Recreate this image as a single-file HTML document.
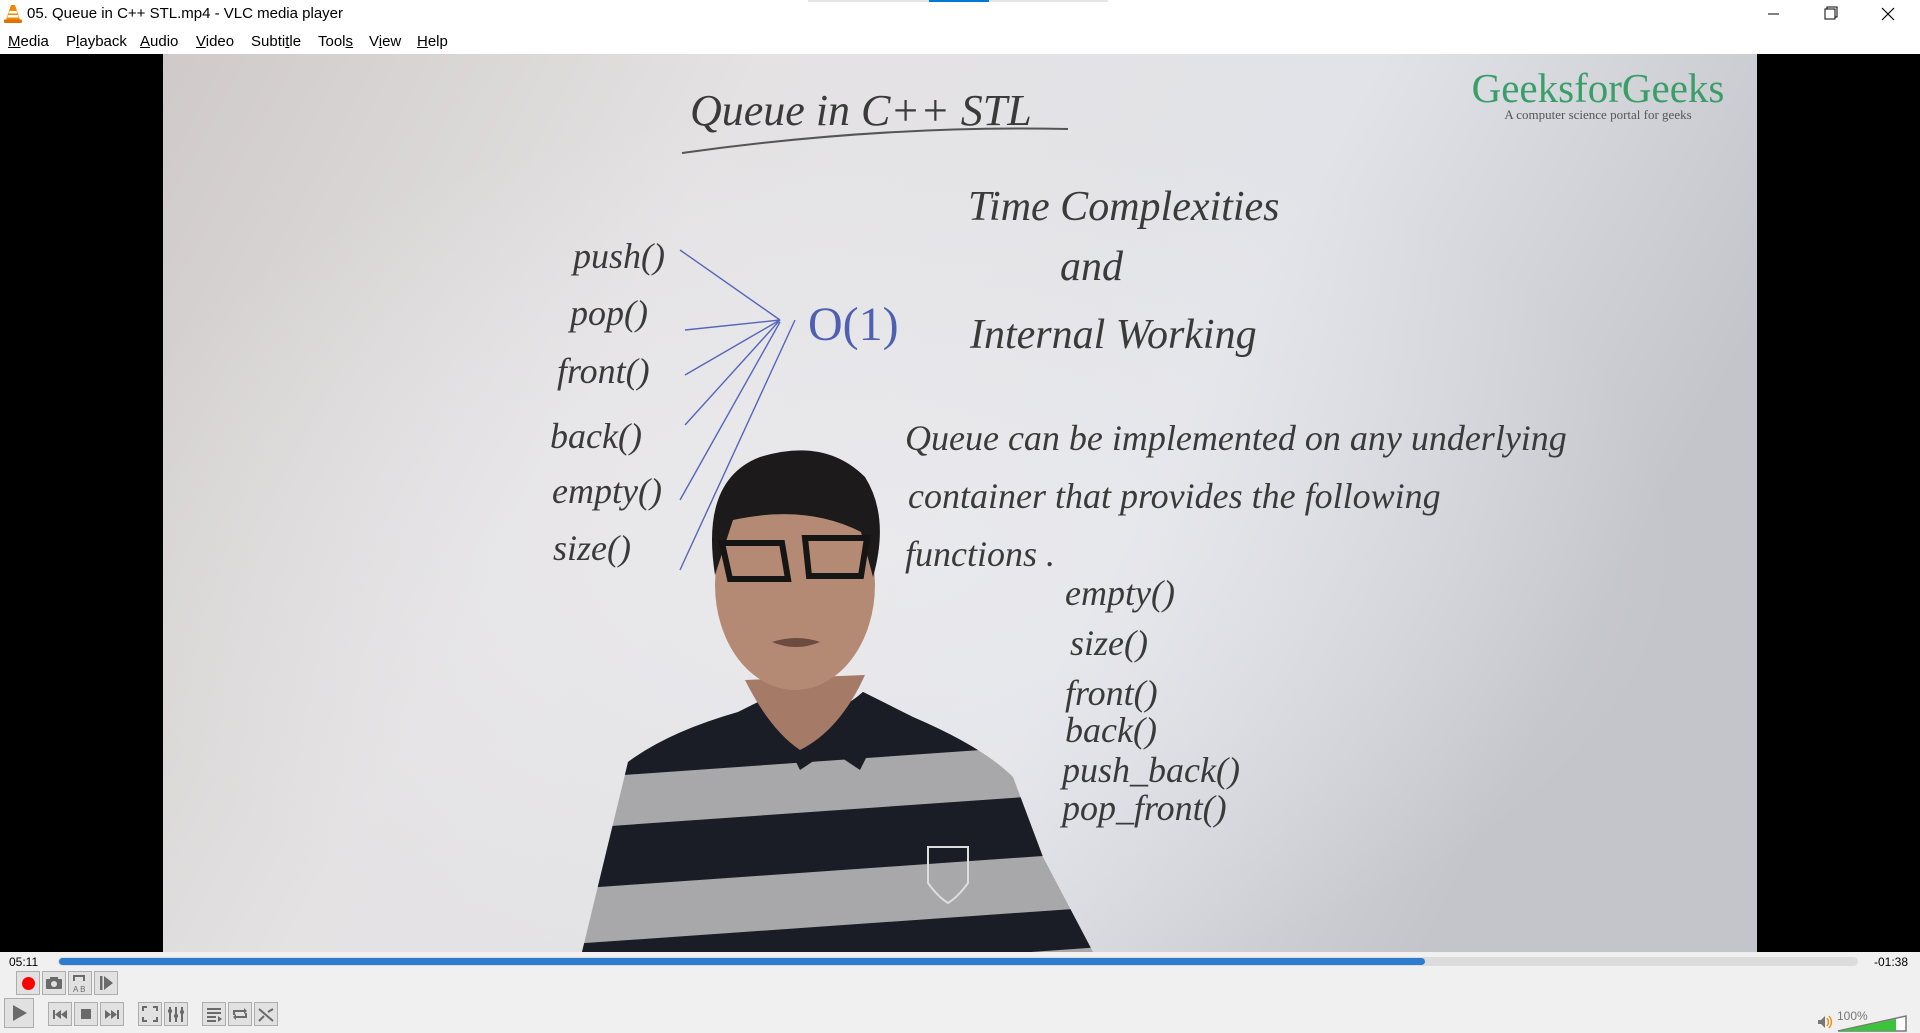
<!DOCTYPE html>
<html><head><meta charset="utf-8">
<style>
*{margin:0;padding:0;box-sizing:border-box}
body{width:1920px;height:1030px;overflow:hidden;background:#f0f0f0;font-family:"Liberation Sans",sans-serif;position:relative}
.title{position:absolute;left:0;top:0;width:1920px;height:28px;background:#fff}
.title span{position:absolute;left:27px;top:5px;font-size:15px;color:#000}
.menu{position:absolute;left:0;top:28px;width:1920px;height:26px;background:#fff}
.menu span{position:absolute;top:5px;font-size:15px;color:#000}
.video{position:absolute;left:0;top:54px;width:1920px;height:898px;background:#000}
.ctrl{position:absolute;left:0;top:952px;width:1920px;height:78px;background:#f0f0f0}
.b{position:absolute;width:24px;height:24px;border:1px solid #adadad;background:#e1e1e1}
.t{position:absolute;font-size:12px;color:#000}
</style></head><body>
<div class="title">
<svg style="position:absolute;left:3px;top:4px" width="20" height="20" viewBox="0 0 20 20"><path d="M8 1h4l5 15H3z" fill="#f08a00"/><path d="M6.5 7h7l.8 2.5h-8.6zM5.2 11h9.6l.8 2.5H4.4z" fill="#fff"/><rect x="1" y="15.5" width="18" height="3.5" rx="1" fill="#e07000"/></svg>
<span>05. Queue in C++ STL.mp4 - VLC media player</span>
<div style="position:absolute;left:808px;top:0;width:300px;height:2px;background:#e5e5e5"></div>
<div style="position:absolute;left:929px;top:0;width:60px;height:2px;background:#0078d7"></div>
<svg style="position:absolute;left:1760px;top:0" width="160" height="28"><path d="M8 14h11" stroke="#000"/><rect x="65" y="9" width="10" height="10" fill="none" stroke="#000"/><path d="M67 9V7h10v10h-2" fill="none" stroke="#000"/><path d="M122 8l12 12M134 8l-12 12" stroke="#000" stroke-width="1.2"/></svg>
</div>
<div class="menu">
<span style="left:8px"><u>M</u>edia</span><span style="left:66px">P<u>l</u>ayback</span><span style="left:140px"><u>A</u>udio</span><span style="left:196px"><u>V</u>ideo</span><span style="left:251px">Subti<u>t</u>le</span><span style="left:318px">Tool<u>s</u></span><span style="left:369px">V<u>i</u>ew</span><span style="left:417px"><u>H</u>elp</span>
</div>
<div class="video">
<svg width="1920" height="898" viewBox="0 54 1920 898" style="position:absolute;left:0;top:0">
<defs>
<linearGradient id="wb" x1="0" y1="0" x2="1" y2="0.3"><stop offset="0" stop-color="#cfcac9"/><stop offset="0.35" stop-color="#e4e2e3"/><stop offset="0.7" stop-color="#e2e3e8"/><stop offset="1" stop-color="#c4c5cb"/></linearGradient>
<radialGradient id="sh" cx="0.45" cy="0.55" r="0.5"><stop offset="0" stop-color="#eeeef2" stop-opacity="0.6"/><stop offset="1" stop-color="#eeeef2" stop-opacity="0"/></radialGradient>
<clipPath id="body"><path d="M628 762q40-30 110-50l40-20q40 40 85 0l50 25q70 30 100 60l30 80 50 95H582z"/></clipPath>
</defs>
<rect x="163" y="54" width="1594" height="898" fill="url(#wb)"/>
<rect x="163" y="54" width="1594" height="898" fill="url(#sh)"/>
<g fill="#3a3a3a" font-family="Liberation Serif" font-style="italic">
<text x="690" y="125" font-size="44">Queue  in C++ STL</text>
<text x="968" y="220" font-size="42">Time Complexities</text>
<text x="1060" y="280" font-size="42">and</text>
<text x="970" y="348" font-size="42">Internal Working</text>
<text x="808" y="340" font-size="48" fill="#5060b0" font-style="normal">O(1)</text>
<g font-size="36">
<text x="573" y="268">push()</text><text x="570" y="325">pop()</text><text x="557" y="383">front()</text><text x="550" y="448">back()</text><text x="552" y="503">empty()</text><text x="553" y="560">size()</text>
<text x="905" y="450">Queue can be implemented on any underlying</text>
<text x="908" y="508">container that provides the following</text>
<text x="905" y="566">functions .</text>
<text x="1065" y="605">empty()</text><text x="1070" y="655">size()</text><text x="1065" y="705">front()</text><text x="1065" y="742">back()</text><text x="1062" y="782">push_back()</text><text x="1062" y="820">pop_front()</text>
</g>
</g>
<path d="M682 153q200-28 386-24" stroke="#555" stroke-width="2" fill="none"/>
<g stroke="#5566bb" stroke-width="1.4"><path d="M680 250l100 70M685 330l95-10M685 375l95-55M685 425l95-105M680 500l100-178M680 570l115-250"/></g>
<text x="1598" y="102" font-size="41" fill="#3a9e69" font-family="Liberation Serif" text-anchor="middle">GeeksforGeeks</text>
<text x="1598" y="119" font-size="13" fill="#555" font-family="Liberation Serif" text-anchor="middle">A computer science portal for geeks</text>
<!-- person -->
<g clip-path="url(#body)">
<rect x="560" y="680" width="560" height="280" fill="#a8a8aa"/>
<g fill="#1a1c26" transform="rotate(-4 840 820)">
<rect x="560" y="690" width="580" height="70"/>
<rect x="560" y="810" width="580" height="60"/>
<rect x="560" y="925" width="580" height="40"/>
</g>
<path d="M760 690l40 80 30-20 30 20 40-80z" fill="#1a1c26"/>
</g>
<path d="M745 680q25 50 55 70 40-20 65-75z" fill="#a57a66"/>
<ellipse cx="795" cy="585" rx="80" ry="105" fill="#b48a75"/>
<path d="M715 575q-15-95 45-118 65-20 105 20 25 40 8 100l-12-45q-55-28-128-12z" fill="#1c1a1a"/>
<path d="M722 543h60l6 36h-58zM805 538h62l-6 38h-52z" fill="none" stroke="#151515" stroke-width="6"/>
<path d="M772 642q25-8 48 0q-24 10-48 0z" fill="#6e4b40"/>
<path d="M928 847h40v36q-10 14-20 20-10-6-20-20z" fill="none" stroke="#ddd" stroke-width="2"/>
</svg>
</div>
<div class="ctrl">
<span class="t" style="left:9px;top:3px">05:11</span>
<span class="t" style="left:1874px;top:3px">-01:38</span>
<div style="position:absolute;left:58px;top:5px;width:1800px;height:9px;border-radius:5px;background:#dcdcdc"></div>
<div style="position:absolute;left:59px;top:6px;width:1366px;height:7px;border-radius:4px;background:#2e7cd0"></div>
<div class="b" style="left:16px;top:19px"><div style="position:absolute;left:5px;top:5px;width:13px;height:13px;border-radius:50%;background:#f00"></div></div>
<div class="b" style="left:42px;top:19px"><svg width="22" height="22"><rect x="3" y="7" width="16" height="10" rx="1" fill="#6a6a6a"/><rect x="7" y="5" width="8" height="3" fill="#6a6a6a"/><circle cx="11" cy="12" r="3" fill="#e1e1e1"/></svg></div>
<div class="b" style="left:68px;top:19px"><svg width="22" height="22"><path d="M5 9V4h10v5" fill="none" stroke="#6a6a6a" stroke-width="2"/><text x="4" y="20" font-size="8" fill="#6a6a6a" font-family="Liberation Sans">A B</text></svg></div>
<div class="b" style="left:94px;top:19px"><svg width="22" height="22"><rect x="5" y="4" width="2.5" height="14" fill="#6a6a6a"/><path d="M9 4l9 7-9 7z" fill="#6a6a6a"/></svg></div>
<div class="b" style="left:4px;top:46px;width:30px;height:30px"><svg width="28" height="28"><path d="M8 6l14 8-14 8z" fill="#6a6a6a"/></svg></div>
<div class="b" style="left:48px;top:50px"><svg width="22" height="22"><rect x="4" y="7" width="2" height="9" fill="#6a6a6a"/><path d="M12 7v9l-6-4.5zM18 7v9l-6-4.5z" fill="#6a6a6a"/></svg></div>
<div class="b" style="left:74px;top:50px"><svg width="22" height="22"><rect x="6" y="6" width="10" height="10" fill="#6a6a6a"/></svg></div>
<div class="b" style="left:100px;top:50px"><svg width="22" height="22"><rect x="16" y="7" width="2" height="9" fill="#6a6a6a"/><path d="M4 7v9l6-4.5zM10 7v9l6-4.5z" fill="#6a6a6a"/></svg></div>
<div class="b" style="left:138px;top:50px"><svg width="22" height="22"><path d="M4 8V4h4M14 4h4v4M18 14v4h-4M8 18H4v-4" fill="none" stroke="#6a6a6a" stroke-width="2"/></svg></div>
<div class="b" style="left:164px;top:50px"><svg width="22" height="22"><path d="M5 4v15M11 4v15M17 4v15" stroke="#6a6a6a" stroke-width="2"/><path d="M3 8h4M9 13h4M15 9h4" stroke="#6a6a6a" stroke-width="3"/></svg></div>
<div class="b" style="left:202px;top:50px"><svg width="22" height="22"><path d="M4 6h14M4 10h14M4 14h9M4 18h9" stroke="#6a6a6a" stroke-width="2"/><path d="M15 13l4 3-4 3z" fill="#6a6a6a"/></svg></div>
<div class="b" style="left:228px;top:50px"><svg width="22" height="22"><path d="M5 12V8h11M17 10v4H6" fill="none" stroke="#6a6a6a" stroke-width="2"/><path d="M15 5l3 3-3 3zM7 11l-3 3 3 3z" fill="#6a6a6a"/></svg></div>
<div class="b" style="left:254px;top:50px"><svg width="22" height="22"><path d="M4 6l14 12M4 18l5-5M13 9l5-3" stroke="#6a6a6a" stroke-width="2"/></svg></div>
<svg style="position:absolute;left:1815px;top:59px" width="105" height="22"><path d="M3 9h3l4-4v12l-4-4H3z" fill="#777"/><path d="M12 7q3 4 0 8M14 5q5 6 0 12" stroke="#f08a00" fill="none" stroke-width="1.3"/><path d="M23 20l68-15v15z" fill="#ffffff" stroke="#777" stroke-width="1.5"/><path d="M24 20l57-12v12z" fill="#3cc23c"/><text x="22" y="9" font-size="12" fill="#777" font-family="Liberation Sans">100%</text></svg>
</div>
</body></html>
